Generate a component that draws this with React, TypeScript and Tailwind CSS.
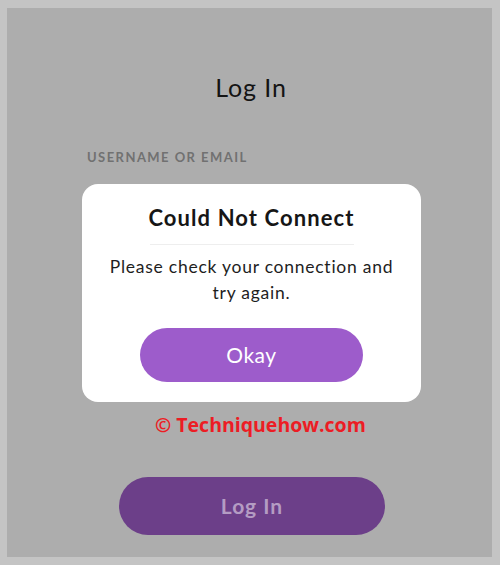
export default function App() {
  return (
    <div className="w-[500px] h-[565px] bg-[#c4c4c4] pt-[8px] pl-[7px] pr-[8px] pb-[8px]" style={{ fontFamily: "Lato, 'Open Sans', sans-serif" }}>
      <div className="relative h-[549px] bg-[#adadad] flex flex-col">
        {/* login screen underneath the dialog */}
        <h1 className="pt-[63px] text-center text-[25px] leading-[32px] text-[#141414] tracking-[0.9px] pl-[3px]">Log In</h1>
        <label className="mt-[46px] ml-[80px] text-[13px] leading-[16px] font-bold tracking-[1.45px] text-[#717171]">
          USERNAME OR EMAIL
        </label>
        <div className="flex-1" />
        <button className="mb-[22px] ml-[112px] w-[266px] h-[58px] rounded-full bg-[#6c3f89] text-[#b49cc3] text-[21px] font-bold tracking-[1px]">
          Log In
        </button>

        {/* error dialog */}
        <div className="absolute left-[75px] top-[176px] w-[339px] h-[218px] bg-white rounded-[16px] flex flex-col items-center pt-[20px]">
          <h2 className="text-[22px] leading-[28px] font-bold text-[#161616] tracking-[1.1px]">Could Not Connect</h2>
          <div className="mt-[12px] w-[204px] h-px bg-[#eeeeee]" />
          <p className="mt-[9px] text-center text-[17.5px] leading-[26px] text-[#1e1e1e] tracking-[0.75px]">
            Please check your connection and
            <br />
            try again.
          </p>
          <button className="mt-[22px] w-[223px] h-[54px] rounded-full bg-[#9d5ccb] text-white text-[21px] tracking-[0.5px]">
            Okay
          </button>
        </div>

        <div className="absolute left-[148px] top-[404px] text-[19.5px] leading-[26px] font-bold text-[#ec1c24]" style={{ fontFamily: "'Open Sans', sans-serif" }}>
          © Techniquehow.com
        </div>
      </div>
    </div>
  );
}
